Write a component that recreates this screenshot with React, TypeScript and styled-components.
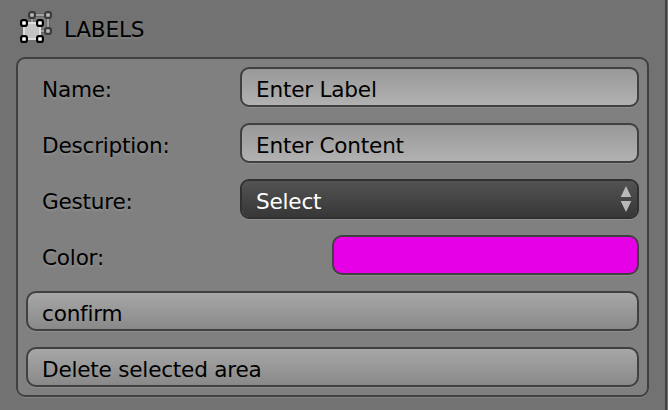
import React from "react";
import styled, { createGlobalStyle } from "styled-components";

const GlobalStyle = createGlobalStyle`
  *, *::before, *::after { box-sizing: border-box; }
  body { margin: 0; background: #727272; }
`;

const Sidebar = styled.main`
  display: flex;
  flex-direction: column;
  width: 667px;
  height: 410px;
  padding: 0 16px 13px;
  border-right: 2px solid #424242;
  background: #727272;
  color: #000;
  font-family: "DejaVu Sans", sans-serif;
  font-size: 21.6px;
  letter-spacing: -0.22px;
  line-height: 26px;
  overflow: hidden;
`;

const Header = styled.header`
  display: flex;
  align-items: center;
  gap: 12px;
  height: 57px;
  padding: 0 0 3px 4px;
`;

const Title = styled.h1`
  margin: 6px 0 0;
  font: inherit;
  text-shadow: 0 2px 2px rgba(255, 255, 255, 0.12);
`;

const Panel = styled.section`
  display: flex;
  flex-direction: column;
  gap: 16px;
  width: 633px;
  height: 340px;
  padding: 8px;
  border: 2px solid #404040;
  border-radius: 9px;
  background: #808080;
  box-shadow: 0 1px 0 #858585;
`;

const Row = styled.div`
  display: grid;
  grid-template-columns: 214px 1fr;
  height: 40px;
`;

const Label = styled.span`
  padding: 10px 0 0 16px;
  text-shadow: 0 2px 2px rgba(255, 255, 255, 0.12);
`;

const Control = styled.div<{ $dark?: boolean }>`
  display: flex;
  align-items: center;
  justify-content: space-between;
  padding: 6px 5px 0 14px;
  border: 2px solid ${(p) => (p.$dark ? "#303030" : "#404040")};
  border-radius: 9px;
  background: ${(p) =>
    p.$dark
      ? "linear-gradient(#535353, #373737)"
      : "linear-gradient(#999, #b1b1b1)"} padding-box;
  color: ${(p) => (p.$dark ? "#fff" : "#000")};
  box-shadow: 0 1px 0 #8e8e8e;
`;

const Swatch = styled.div`
  justify-self: end;
  width: 307px;
  border: 2px solid #404040;
  border-radius: 10px;
  background: #e600e6;
  box-shadow: 0 1px 0 #8e8e8e;
`;

const Button = styled.button`
  height: 40px;
  padding: 6px 14px 0;
  border: 2px solid #404040;
  border-radius: 10px;
  background: linear-gradient(#a7a7a7, #898989) padding-box;
  box-shadow: 0 1px 0 #8e8e8e;
  color: #000;
  font: inherit;
  letter-spacing: inherit;
  text-align: left;
`;

const Arrows = styled.svg`
  display: block;
  margin-top: -6px;
`;

const nodes = (points: number[][], fill: string, stroke: string) =>
  points.map(([x, y]) => (
    <rect key={`${x}-${y}`} x={x - 2.9} y={y - 2.9} width="5.8" height="5.8" rx="2" fill={fill} stroke={stroke} strokeWidth="2.2" />
  ));

const GroupIcon = () => (
  <svg width="32" height="34" viewBox="0 0 32 34" aria-hidden="true">
    <rect x="12" y="5" width="16" height="16" fill="#7c7c7c" stroke="#5a5a5a" strokeWidth="3" />
    <rect x="12" y="5" width="16" height="16" fill="none" stroke="#a0a0a0" strokeWidth="2" />
    {nodes([[12, 5], [28, 5], [28, 21]], "#b9b9b9", "#3b3b3b")}
    <rect x="4" y="13" width="16" height="16" fill="#c3c3c3" stroke="#dedede" strokeWidth="2" />
    {nodes([[4, 13], [20, 13], [4, 29], [20, 29]], "#fff", "#000")}
  </svg>
);

export default function App() {
  return (
    <>
      <GlobalStyle />
      <Sidebar>
        <Header>
          <GroupIcon />
          <Title>LABELS</Title>
        </Header>
        <Panel>
          <Row><Label>Name:</Label><Control>Enter Label</Control></Row>
          <Row><Label>Description:</Label><Control>Enter Content</Control></Row>
          <Row>
            <Label>Gesture:</Label>
            <Control $dark>
              Select
              <Arrows width="12" height="28" viewBox="0 0 12 28" fill="#b9b9b9" aria-hidden="true">
                <path d="M6 1 11.3 12H.7ZM.7 16h10.6L6 27Z" />
              </Arrows>
            </Control>
          </Row>
          <Row><Label>Color:</Label><Swatch /></Row>
          <Button>confirm</Button>
          <Button>Delete selected area</Button>
        </Panel>
      </Sidebar>
    </>
  );
}
